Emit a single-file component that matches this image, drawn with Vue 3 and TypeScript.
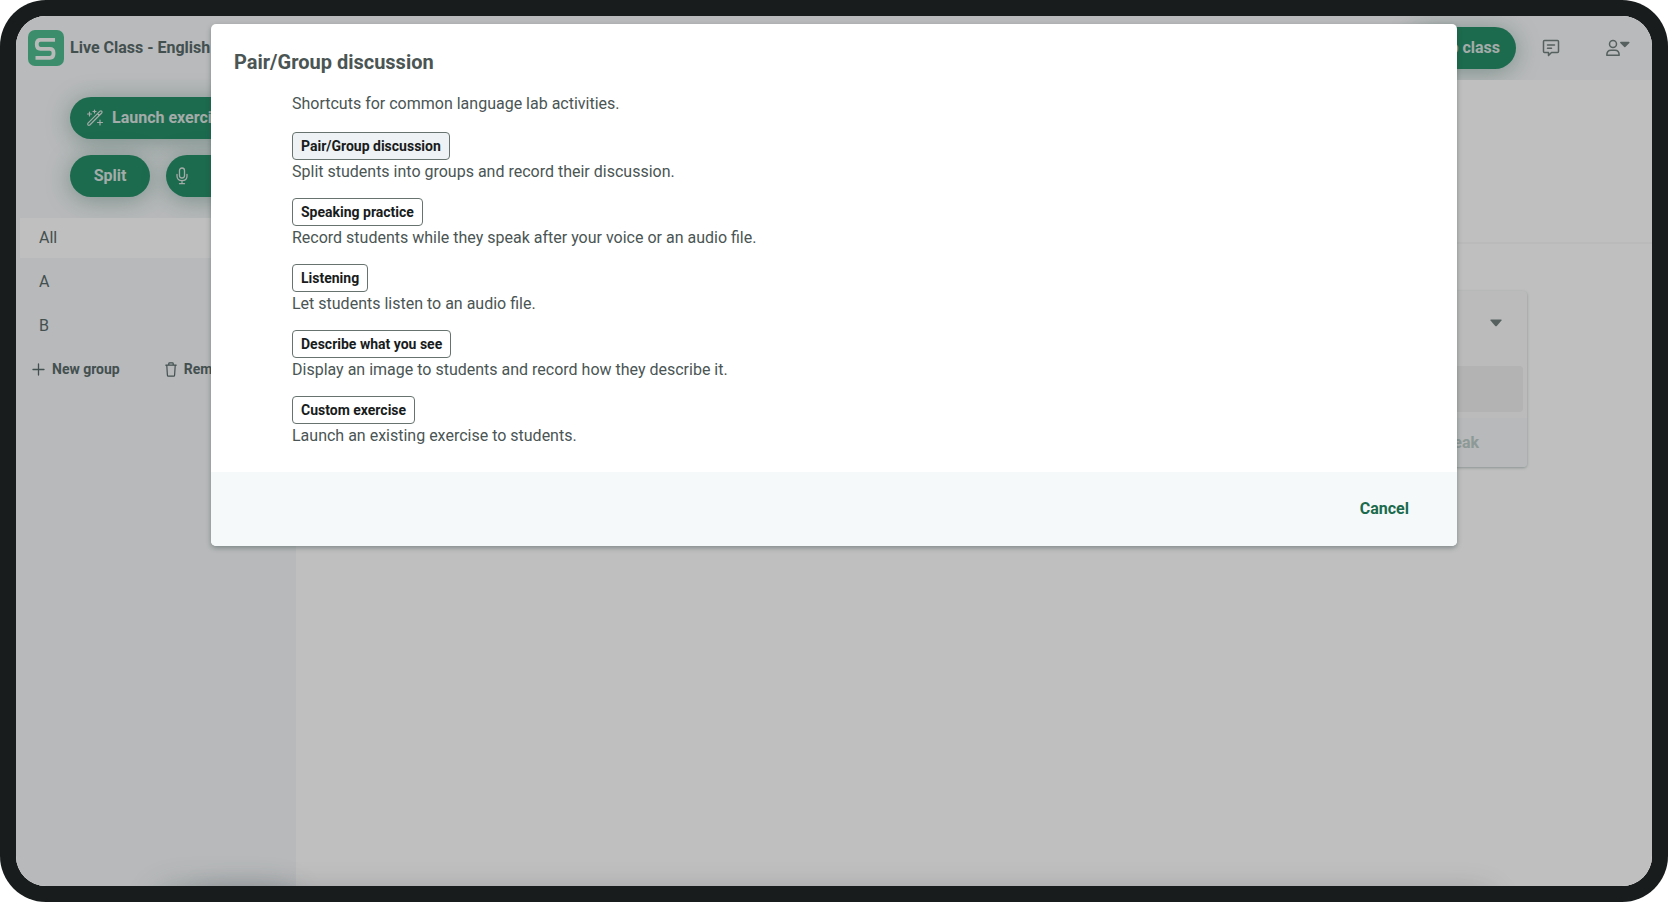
<script setup lang="ts">
interface Activity {
  name: string
  text: string
  active?: boolean
}

const activities: Activity[] = [
  { name: 'Pair/Group discussion', text: 'Split students into groups and record their discussion.', active: true },
  { name: 'Speaking practice', text: 'Record students while they speak after your voice or an audio file.' },
  { name: 'Listening', text: 'Let students listen to an audio file.' },
  { name: 'Describe what you see', text: 'Display an image to students and record how they describe it.' },
  { name: 'Custom exercise', text: 'Launch an existing exercise to students.' },
]

const groups: string[] = ['All', 'A', 'B']
</script>

<template>
  <div class="device">
    <div class="screen">
      <header class="topbar">
        <svg class="logo" viewBox="0 0 36 36" aria-hidden="true">
          <rect width="36" height="36" rx="7" fill="#50bc90" />
          <path d="M27 9.800H12.500q-3.700 0-3.700 3.700v1.600q0 3.700 3.700 3.700h9.300q3.700 0 3.700 3.700v1.600q0 3.700-3.700 3.700H7.500" fill="none" stroke="#f4f8f6" stroke-width="3.800" />
        </svg>
        <h1 class="class-name">Live Class - English</h1>
        <button class="pill stop" type="button">Stop class</button>
        <button class="icon-btn chat" type="button" aria-label="Chat">
          <svg width="18" height="18" viewBox="0 0 18 18" fill="none" stroke="currentColor" stroke-width="1.500" stroke-linejoin="round" stroke-linecap="round">
            <path d="M2.500 1.500h13q1 0 1 1v10q0 1-1 1H9.500L6.500 16.500v-3h-4q-1 0-1-1v-10q0-1 1-1zM5.500 6h7M5.500 9.200h4" />
          </svg>
        </button>
        <button class="icon-btn user" type="button" aria-label="Account">
          <svg width="26" height="18" viewBox="0 0 26 18" fill="none" stroke="currentColor" stroke-width="1.500" stroke-linejoin="round">
            <circle cx="8" cy="5" r="3.500" />
            <path d="M1.800 16.300c0-3.400 1.700-5.100 4.200-5.100h4c2.500 0 4.200 1.700 4.200 5.100z" />
            <path d="M15.800 3.500h8l-4 4z" fill="currentColor" />
          </svg>
        </button>
      </header>

      <div class="body">
        <aside class="sidebar">
          <div class="actions">
            <button class="pill launch" type="button">
              <svg width="18" height="18" viewBox="0 0 18 18" fill="none" stroke="currentColor" stroke-width="1.200" stroke-linejoin="round" stroke-linecap="round">
                <path d="M2 14.200L14 2.200q.9-.7 1.700 0 .8.900 0 1.800L3.800 16q-.9.700-1.800 0-.7-.9 0-1.800zM11.500 4.700l1.800 1.800" />
                <path d="M3.500 3v4M1.500 5h4M8.500 1v3M7 2.500h3M14 11v5M11.500 13.500h5" />
              </svg>
              Launch exercise
            </button>
            <div class="row">
              <button class="pill split" type="button">Split</button>
              <button class="pill record" type="button" aria-label="Record">
                <svg width="12" height="18" viewBox="0 0 12 18" fill="none" stroke="currentColor" stroke-width="1.300" stroke-linecap="round">
                  <rect x="3.500" y="1" width="5" height="10" rx="2.500" />
                  <path d="M1 7.500v1.500c0 3 2 4.700 5 4.700s5-1.700 5-4.700V7.500M6 13.700v3M3.500 16.700h5" />
                </svg>
              </button>
            </div>
          </div>
          <nav class="groups">
            <a v-for="(g, i) in groups" :key="g" href="#" :class="{ selected: i === 0 }">{{ g }}</a>
          </nav>
          <div class="group-tools">
            <button class="tool" type="button">
              <svg width="13" height="13" viewBox="0 0 13 13" stroke="currentColor" stroke-width="1.300" stroke-linecap="round"><path d="M6.500 1v11M1 6.500h11" /></svg>
              New group
            </button>
            <button class="tool" type="button">
              <svg width="12" height="15" viewBox="0 0 12 15" fill="none" stroke="currentColor" stroke-width="1.200" stroke-linejoin="round" stroke-linecap="round"><path d="M.8 3.200h10.400M3.800 3V1.500q0-.7.700-.7h3q.7 0 .7.700V3M1.800 3.500l.6 9.700q0 1 1 1h5.200q1 0 1-1l.6-9.700" /></svg>
              Remove
            </button>
          </div>
        </aside>

        <main class="content">
          <div class="strip"></div>
          <section class="card">
            <div class="card-head">
              <button class="icon-btn" type="button" aria-label="Expand">
                <svg width="12" height="8" viewBox="0 0 12 8"><path d="M.5 1.500q-.5-1 .5-1h10q1 0 .5 1L7 6.800q-1 1-2 0z" fill="currentColor" /></svg>
              </button>
            </div>
            <div class="slot"></div>
            <div class="card-foot"><button type="button" disabled>Speak</button></div>
          </section>
        </main>
      </div>

      <div class="dock"><i class="dock-start"></i><i class="dock-rest"></i></div>

      <div class="overlay">
        <div class="modal" role="dialog" aria-modal="true" aria-labelledby="modal-title">
          <div class="modal-body">
            <h2 id="modal-title">Pair/Group discussion</h2>
            <div class="activities">
              <p class="intro">Shortcuts for common language lab activities.</p>
              <div v-for="a in activities" :key="a.name" class="activity">
                <button type="button" :class="{ active: a.active }">{{ a.name }}</button>
                <p>{{ a.text }}</p>
              </div>
            </div>
          </div>
          <footer class="modal-foot">
            <button type="button">Cancel</button>
          </footer>
        </div>
      </div>
    </div>
  </div>
</template>

<style>
body {
  margin: 0;
  background: #fff;
}
</style>

<style scoped>
* {
  box-sizing: border-box;
}
button {
  font: inherit;
  border: 0;
  margin: 0;
  padding: 0;
  background: none;
  color: inherit;
  white-space: nowrap;
  cursor: pointer;
}
h1,
h2,
p {
  margin: 0;
}
svg {
  display: block;
  flex: none;
}
.device {
  height: 100vh;
  padding: 16px;
  background: #181c1c;
  border-radius: 46px;
  font-family: Roboto, "Liberation Sans", sans-serif;
  font-size: 16px;
  line-height: 24px;
  color: #5a6b6b;
}
.screen {
  position: relative;
  height: 100%;
  display: flex;
  flex-direction: column;
  overflow: hidden;
  border-radius: 30px;
  background: #fff;
}
.topbar {
  display: flex;
  align-items: center;
  height: 64px;
  padding: 0 21px 0 12px;
  background: #f7f8fa;
}
.logo {
  width: 36px;
  height: 36px;
}
.class-name {
  margin-left: 6px;
  font-size: 16px;
  font-weight: 700;
}
.pill {
  display: flex;
  align-items: center;
  height: 42px;
  border-radius: 21px;
  background: #268f69;
  color: #dbe4e0;
  font-weight: 700;
  box-shadow: 0 3px 24px rgba(38, 110, 85, 0.4);
}
.stop {
  margin-left: auto;
  padding: 0 16px;
}
.icon-btn {
  color: #73807f;
}
.chat {
  margin-left: 26px;
}
.user {
  margin-left: 45px;
}
.body {
  flex: 1;
  display: flex;
  min-height: 0;
}
.sidebar {
  width: 280px;
  flex: none;
  background: #f5f7f9;
}
.actions {
  display: flex;
  flex-direction: column;
  gap: 16px;
  padding: 17px 24px 21px 54px;
}
.launch {
  gap: 8px;
  padding: 0 16px;
}
.row {
  display: flex;
  gap: 16px;
}
.split {
  width: 80px;
  justify-content: center;
}
.record {
  flex: 1;
  padding-left: 10px;
}
.groups {
  display: flex;
  flex-direction: column;
  gap: 4px;
  padding: 0 4px;
}
.groups a {
  height: 40px;
  padding: 8px 19px;
  color: inherit;
  text-decoration: none;
}
.groups .selected {
  background: #fff;
}
.group-tools {
  display: flex;
  gap: 45px;
  padding: 11px 16px;
}
.tool {
  display: flex;
  align-items: center;
  gap: 7px;
  font-size: 14px;
  font-weight: 700;
}
.content {
  flex: 1;
  background: #fff;
}
.strip {
  height: 164px;
  border-bottom: 2px solid #f8f8f8;
}
.card {
  margin: 47px 125px 0 40px;
  border-radius: 4px;
  background: #fafafa;
  box-shadow: 0 1px 3px rgba(50, 85, 80, 0.35);
}
.card-head {
  display: flex;
  justify-content: flex-end;
  height: 75px;
  padding: 28px 25px 0 0;
}
.card-head .icon-btn {
  align-self: flex-start;
}
.slot {
  height: 46px;
  margin: 0 4px 6px;
  border-radius: 4px;
  background: #efefef;
}
.card-foot {
  display: flex;
  justify-content: flex-end;
  height: 49px;
  padding-right: 48px;
  border-radius: 0 0 4px 4px;
  background: #f5f7f9;
}
.card-foot button {
  font-weight: 700;
  color: #bccdc8;
}
.dock {
  position: absolute;
  inset: auto 0 0 0;
  height: 0;
}
.dock i {
  position: absolute;
  top: 4px;
  height: 40px;
  border-radius: 20px;
}
.dock-start {
  left: 140px;
  width: 140px;
  box-shadow: 0 0 32px rgba(60, 90, 80, 0.3);
}
.dock-rest {
  left: 180px;
  right: 156px;
  box-shadow: 0 0 28px rgba(60, 60, 80, 0.22);
}
.overlay {
  position: absolute;
  inset: 0;
  padding: 8px 195px;
  background: rgba(0, 0, 0, 0.25);
}
.modal {
  border-radius: 5px;
  overflow: hidden;
  background: #fff;
  box-shadow: 0 2px 5px rgba(40, 60, 60, 0.4);
  color: #4a5554;
}
.modal-body {
  padding: 26px 23px 24px;
}
h2 {
  font-size: 20px;
  line-height: 24px;
  font-weight: 700;
}
.activities {
  display: flex;
  flex-direction: column;
  gap: 14px;
  padding: 18px 58px 0;
}
.intro {
  padding-bottom: 2px;
}
.activity {
  display: flex;
  flex-direction: column;
  align-items: flex-start;
}
.activity button {
  height: 28px;
  padding: 0 8px;
  border: 1px solid #66736f;
  border-radius: 4px;
  background: #fff;
  color: #181c1c;
  font-size: 14px;
  font-weight: 700;
}
.activity .active {
  background: #eff2f4;
}
.modal-foot {
  display: flex;
  justify-content: flex-end;
  align-items: center;
  height: 74px;
  padding: 0 48px;
  background: #f5f9fa;
  color: #1a6b4d;
}
.modal-foot button {
  font-weight: 700;
}
</style>
